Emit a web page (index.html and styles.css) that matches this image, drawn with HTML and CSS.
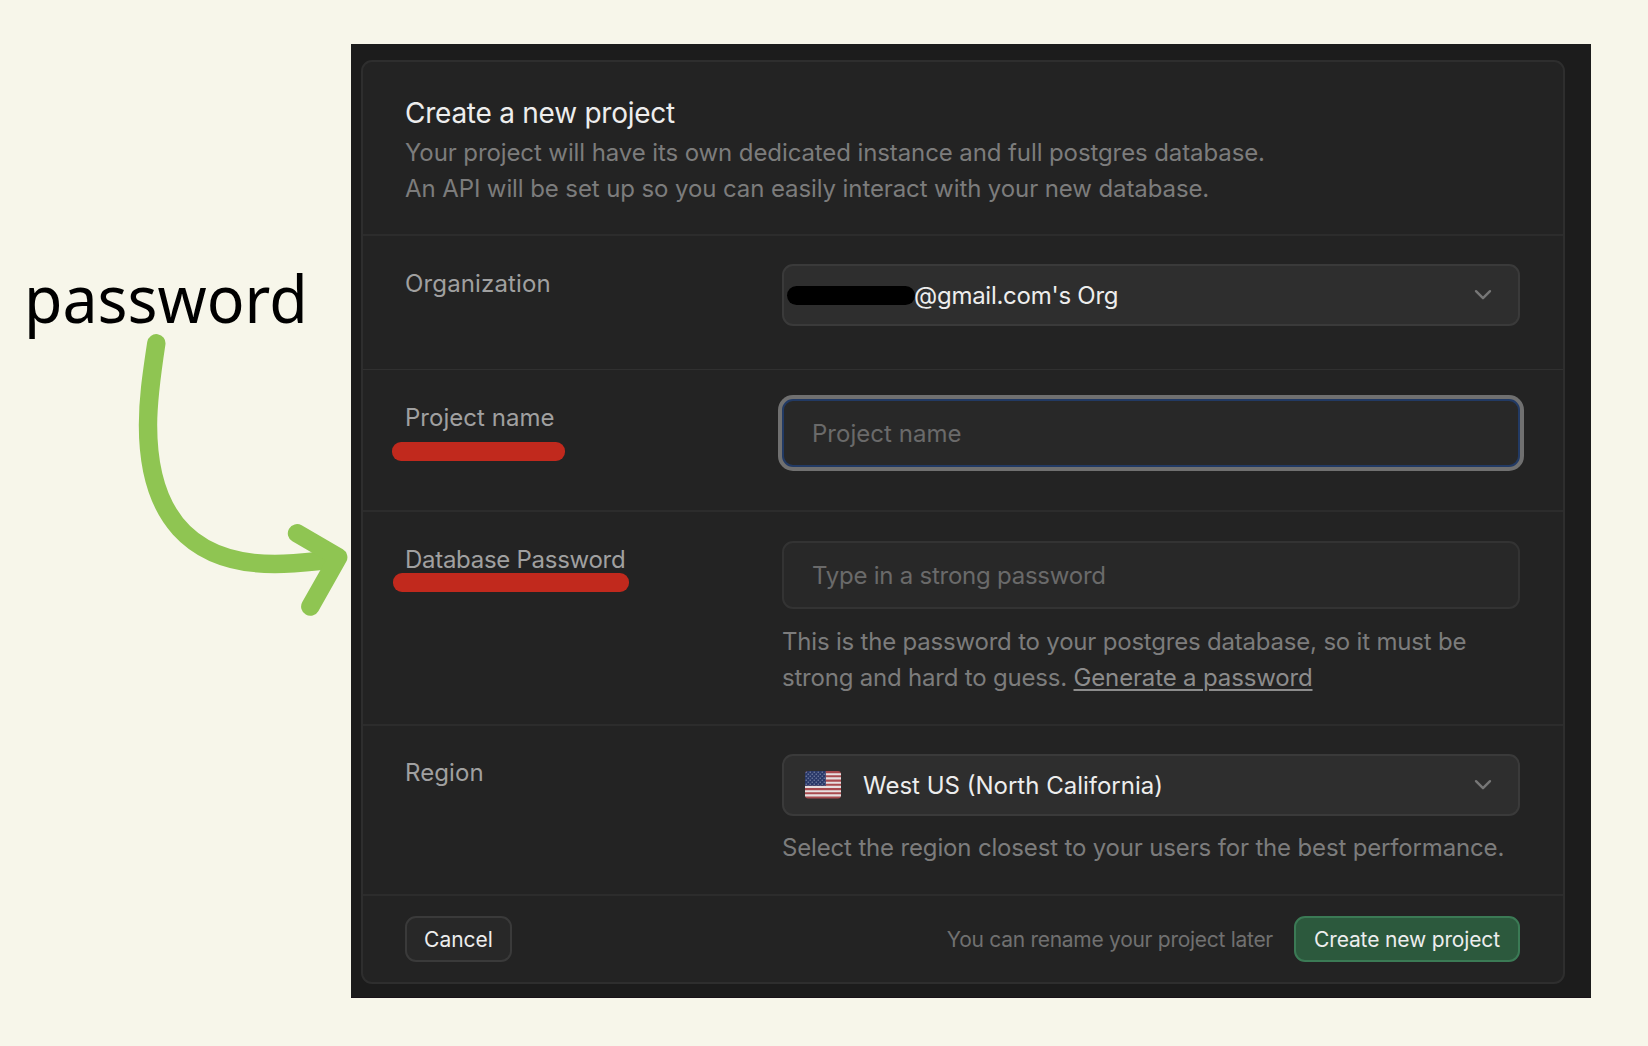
FILE: index.html
```
<!DOCTYPE html>
<html lang="en">
<head>
  <meta charset="utf-8">
  <title>Create a new project</title>
  <link rel="stylesheet" href="styles.css">
</head>
<body>
  <div class="page">
    <aside class="note">
      <div class="note-text">password</div>
      <svg class="note-arrow" width="220" height="290" viewBox="130 330 220 290" fill="none" stroke="#8fc552" stroke-width="18.4" stroke-linecap="round" stroke-linejoin="round">
        <path d="M156.3 343.3C151 378 148 400 148 425C148 515 190 564 275 564C291 564 305 562.5 319 561"/>
        <path d="M297 533.3L338.2 557.3L310.3 606.6"/>
      </svg>
    </aside>

    <main class="shot">
      <form class="card">
        <header class="card-head">
          <h1 class="title">Create a new project</h1>
          <p class="desc">Your project will have its own dedicated instance and full postgres database.<br>An API will be set up so you can easily interact with your new database.</p>
        </header>

        <section class="row row-org">
          <div class="label ls-org">Organization</div>
          <div class="field">
            <div class="select">
              <span class="redaction"></span>
              <span class="select-text org-text">@gmail.com's Org</span>
              <svg class="chevron" width="20" height="14" viewBox="0 0 20 14"><path d="M3 3.2L10 10.2L17 3.2"/></svg>
            </div>
          </div>
        </section>

        <section class="row row-name">
          <div class="label ls-name">Project name<span class="underline underline-name"></span></div>
          <div class="field">
            <div class="input input-focus ls-name">Project name</div>
          </div>
        </section>

        <section class="row row-password">
          <div class="label ls-password">Database Password<span class="underline underline-password"></span></div>
          <div class="field">
            <div class="input">Type in a strong password</div>
            <p class="help">This is the password to your postgres database, so it must be<br>strong and hard to guess. <a class="generate">Generate a password</a></p>
          </div>
        </section>

        <section class="row row-region">
          <div class="label ls-region">Region</div>
          <div class="field">
            <div class="select">
              <svg class="flag" width="36" height="28" viewBox="0 0 36 28">
                <defs>
                  <clipPath id="flag-shape"><rect width="36" height="27.6" rx="3"/></clipPath>
                  <pattern id="stars" width="4" height="4" patternUnits="userSpaceOnUse"><circle cx="1.2" cy="1.2" r=".6"/><circle cx="3.2" cy="3.2" r=".6"/></pattern>
                </defs>
                <g clip-path="url(#flag-shape)">
                  <rect width="36" height="28" fill="#a84a4e"/>
                  <path d="M0 3.2H36M0 7.4H36M0 11.7H36M0 15.9H36M0 20.2H36M0 24.4H36" stroke="#e6e0e0" stroke-width="2.1"/>
                  <rect width="20.8" height="14.8" fill="#2a3969"/>
                  <rect width="20.8" height="14.8" fill="url(#stars)" class="stars"/>
                </g>
              </svg>
              <span class="select-text region-text">West US (North California)</span>
              <svg class="chevron" width="20" height="14" viewBox="0 0 20 14"><path d="M3 3.2L10 10.2L17 3.2"/></svg>
            </div>
            <p class="help help-region">Select the region closest to your users for the best performance.</p>
          </div>
        </section>

        <footer class="card-foot">
          <button class="btn btn-cancel" type="button">Cancel</button>
          <span class="hint">You can rename your project later</span>
          <button class="btn btn-create" type="button">Create new project</button>
        </footer>
      </form>
    </main>
  </div>
</body>
</html>
```
FILE: styles.css
```
* {
  box-sizing: border-box;
}

body {
  margin: 0;
  background: #f7f6ea;
  font-family: Inter, "Liberation Sans", sans-serif;
}

.page {
  display: flex;
  height: 1046px;
  overflow: hidden;
  position: relative;
}

.note {
  width: 351px;
  padding: 252px 0 0 24px;
}

.note-text {
  width: 300px;
  font-family: "Noto Sans", sans-serif;
  font-size: 66px;
  line-height: 90px;
  transform: scaleX(0.948);
  transform-origin: left;
  color: #000;
}

.note-arrow {
  position: absolute;
  left: 130px;
  top: 330px;
}

.shot {
  width: 1240px;
  height: 954px;
  margin-top: 44px;
  padding: 16px 26px 14px 10px;
  background: #1c1c1c;
  border-bottom: 1px solid #181218;
}

.card {
  height: 924px;
  margin: 0;
  display: flex;
  flex-direction: column;
  background: #232323;
  border: 2px solid #2e2e2e;
  border-radius: 11px;
}

.card-head {
  height: 174px;
  padding: 33px 42px 0;
  border-bottom: 2px solid #2c2c2c;
}

.title {
  margin: 0 0 4px;
  font-size: 28px;
  line-height: 36px;
  font-weight: 400;
  letter-spacing: -0.25px;
  color: #ededed;
}

.desc,
.help {
  margin: 0;
  font-size: 24px;
  line-height: 36px;
  letter-spacing: -0.1px;
  color: #7c7c7c;
  white-space: nowrap;
}

.row {
  display: grid;
  grid-template-columns: 377px 738px;
  padding: 29px 42px 0;
  border-bottom: 2px solid #2c2c2c;
}

.row-org {
  height: 134px;
  padding-top: 28px;
  border-bottom: 1px solid #303030;
}

.row-name {
  height: 142px;
}

.row-password {
  height: 214px;
}

.row-region {
  height: 170px;
  padding-top: 28px;
}

.label {
  position: relative;
  padding-top: 1px;
  font-size: 24px;
  line-height: 36px;
  color: #a0a0a0;
}

.ls-org {
  padding-top: 2px;
  letter-spacing: 0.15px;
}

.ls-name {
  letter-spacing: 0.03px;
}

.ls-password {
  letter-spacing: -0.28px;
}

.ls-region {
  letter-spacing: 0.1px;
}

.underline {
  position: absolute;
  height: 19px;
  border-radius: 9px;
  background: #c1291d;
}

.underline-name {
  left: -13px;
  top: 43px;
  width: 173px;
}

.underline-password {
  left: -12px;
  top: 32px;
  width: 236px;
}

.select,
.input {
  display: flex;
  align-items: center;
  width: 738px;
  font-size: 24px;
  border: 2px solid #333;
  border-radius: 11px;
}

.select {
  height: 62px;
  padding-right: 25px;
  background: #2e2e2e;
  border-color: #3a3a3a;
  color: #ededed;
}

.input {
  height: 68px;
  padding-left: 28px;
  background: #282828;
  color: #6a6a6a;
  letter-spacing: -0.24px;
}

.input.ls-name {
  letter-spacing: 0.03px;
}

.input-focus {
  border-color: #223a64;
  box-shadow: 0 0 0 4px #707070;
}

.redaction {
  width: 128px;
  height: 19px;
  margin-left: 3px;
  border-radius: 10px;
  background: #000;
}

.org-text {
  margin-left: -1px;
  letter-spacing: -0.26px;
}

.chevron {
  margin-left: auto;
  fill: none;
  stroke: #767676;
  stroke-width: 2.4;
  stroke-linecap: round;
  stroke-linejoin: round;
}

.flag {
  margin-left: 21px;
}

.stars {
  opacity: 0.6;
}

#stars circle {
  fill: #dfe3f0;
}

.region-text {
  margin-left: 22px;
}

.help {
  margin-top: 15px;
  letter-spacing: -0.2px;
}

.help-region {
  margin-top: 14px;
  letter-spacing: -0.16px;
}

.generate {
  letter-spacing: -0.15px;
  color: #8c8c8c;
  text-decoration: underline;
  text-decoration-thickness: 2px;
  text-underline-offset: 3px;
}

.card-foot {
  display: flex;
  align-items: center;
  height: 86px;
  padding: 0 43px 0 42px;
}

.btn {
  height: 46px;
  padding: 0;
  font-family: inherit;
  font-size: 21px;
  border-radius: 11px;
  color: #ededed;
}

.btn-cancel {
  width: 107px;
  background: #282828;
  border: 2px solid #3a3a3a;
}

.btn-create {
  width: 226px;
  margin-left: 21px;
  background: #2c593d;
  border: 2px solid #3b7a55;
  letter-spacing: -0.15px;
}

.hint {
  margin-left: auto;
  font-size: 21px;
  letter-spacing: -0.28px;
  color: #707070;
}
```
